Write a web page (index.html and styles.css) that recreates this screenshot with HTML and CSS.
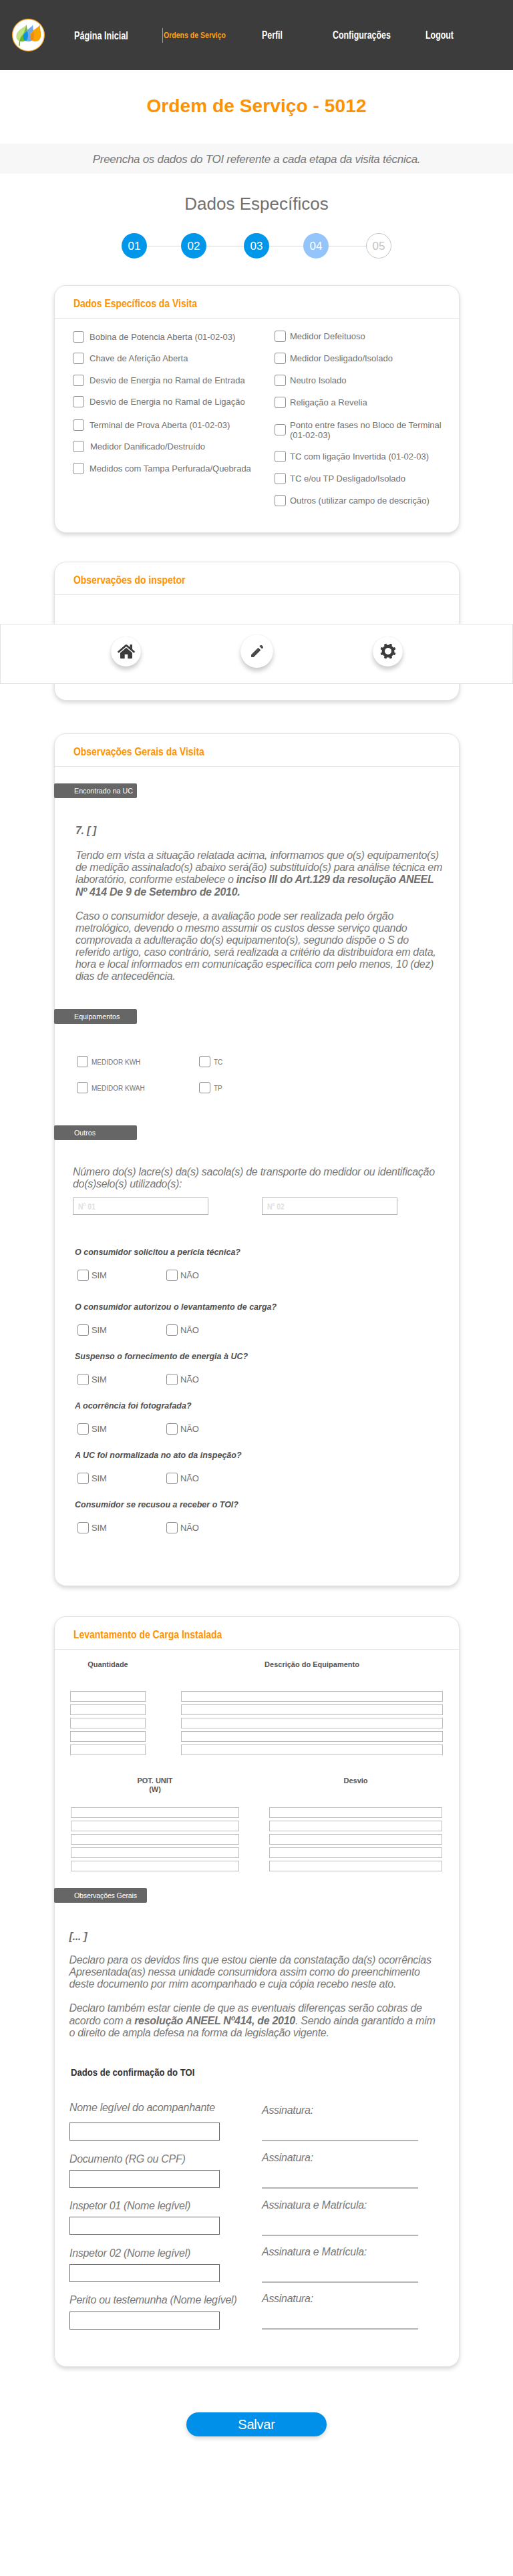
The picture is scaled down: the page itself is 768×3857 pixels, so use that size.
FILE: index.html
```html
<!DOCTYPE html>
<html lang="pt-BR">
<head>
<meta charset="utf-8">
<title>Ordem de Serviço - 5012</title>
<link rel="stylesheet" href="styles.css">
</head>
<body>
<header class="topbar">
  <a class="logo">
    <svg width="49" height="49" viewBox="0 0 49 49">
      <circle cx="24.5" cy="24.5" r="23.9" fill="#fff" stroke="#f9a51a" stroke-width="1.2"/>
      <path d="M22 8.7C17 14 6.3 17 6.3 26.5C6.3 31 9 34 15 34.2C21 34 24 30 24 25C24 19 21.500 15 22 8.700Z" fill="#bfe087"/>
      <path d="M22 8.700C21.500 15 24 19 24 25C24 30 21 34 15 34.200L12.300 34L11.700 40.700H10.200C10.400 36 11 32 13 28L18 21L20 15Z" fill="#6db824"/>
      <path d="M31.200 8.700C30 13.500 16.700 18 16.700 27C16.700 31.500 20 34.200 25 34.200C30 34.200 33.200 30.500 33.200 25C33.200 19 31 16 31.200 8.700Z" fill="#6fabea"/>
      <path d="M22.600 18.500C19 21 16.700 23.500 16.700 27C16.700 30.500 18.500 32.700 20.500 33.400C23 31.500 24 28.500 24 25C24 22 23.300 20.500 22.600 18.500Z" fill="#0b93e0"/>
      <path d="M41.700 8.700C40 14 27 17.500 27 26.500C27 31.500 30.500 34.200 35 34.200C40 34.200 43.300 30 43.300 24.500C43.300 19 41.500 15 41.700 8.700Z" fill="#fba300"/>
      <path d="M32.700 19.500C29 22 27 24 27 27C27 30 28.300 32 30 33C32.500 30.500 33.500 26 32.700 19.500Z" fill="#ee8a16"/>
    </svg>
  </a>
  <a class="nav nav-first"><span class="nav-text">Página Inicial</span></a>
  <a class="nav nav-active"><span class="nav-text">Ordens de Serviço</span></a>
  <a class="nav"><span class="nav-text">Perfil</span></a>
  <a class="nav"><span class="nav-text">Configurações</span></a>
  <a class="nav"><span class="nav-text">Logout</span></a>
</header>

<h1 class="page-title">Ordem de Serviço - 5012</h1>
<p class="hint">Preencha os dados do TOI referente a cada etapa da visita técnica.</p>
<h2 class="step-title">Dados Específicos</h2>

<div class="steps">
  <span class="step">01</span><span class="link w51"></span>
  <span class="step">02</span><span class="link w56"></span>
  <span class="step">03</span><span class="link w51"></span>
  <span class="step current">04</span><span class="link w56"></span>
  <span class="step pending">05</span>
</div>

<section class="card card-data">
  <h3 class="card-title"><span>Dados Específicos da Visita</span></h3>
  <div class="columns">
    <div class="col-left">
      <label class="check"><i class="box"></i>Bobina de Potencia Aberta (01-02-03)</label>
      <label class="check"><i class="box"></i>Chave de Aferição Aberta</label>
      <label class="check"><i class="box"></i>Desvio de Energia no Ramal de Entrada</label>
      <label class="check"><i class="box"></i>Desvio de Energia no Ramal de Ligação</label>
      <label class="check"><i class="box"></i>Terminal de Prova Aberta (01-02-03)</label>
      <label class="check nudge"><i class="box"></i>Medidor Danificado/Destruído</label>
      <label class="check"><i class="box"></i>Medidos com Tampa Perfurada/Quebrada</label>
    </div>
    <div class="col-right">
      <label class="check"><i class="box"></i>Medidor Defeituoso</label>
      <label class="check"><i class="box"></i>Medidor Desligado/Isolado</label>
      <label class="check"><i class="box"></i>Neutro Isolado</label>
      <label class="check"><i class="box"></i>Religação a Revelia</label>
      <label class="check tall"><i class="box"></i><span>Ponto entre fases no Bloco de Terminal<br>(01-02-03)</span></label>
      <label class="check"><i class="box"></i>TC com ligação Invertida (01-02-03)</label>
      <label class="check"><i class="box"></i>TC e/ou TP Desligado/Isolado</label>
      <label class="check"><i class="box"></i>Outros (utilizar campo de descrição)</label>
    </div>
  </div>
</section>

<section class="card card-notes">
  <h3 class="card-title"><span>Observações do inspetor</span></h3>
</section>

<section class="card card-general">
  <h3 class="card-title"><span>Observações Gerais da Visita</span></h3>
  <div class="tag tag-found">Encontrado na UC</div>
  <div class="prose prose-found">
    <p><b class="mark">7. [ ]</b></p>
    <p>Tendo em vista a situação relatada acima, informamos que o(s) equipamento(s)<br>de medição assinalado(s) abaixo será(ão) substituído(s) para análise técnica em</p>
    <p class="strong-lines">laboratório, conforme estabelece o <b>inciso III do Art.129 da resolução ANEEL<br>Nº 414 De 9 de Setembro de 2010.</b></p>
    <p class="gap">Caso o consumidor deseje, a avaliação pode ser realizada pelo órgão<br>metrológico, devendo o mesmo assumir os custos desse serviço quando<br>comprovada a adulteração do(s) equipamento(s), segundo dispõe o S do<br>referido artigo, caso contrário, será realizada a critério da distribuidora em data,<br>hora e local informados em comunicação específica com pelo menos, 10 (dez)<br>dias de antecedência.</p>
  </div>
  <div class="tag tag-equip">Equipamentos</div>
  <div class="equip">
    <label class="small-check"><i class="box"></i>MEDIDOR KWH</label>
    <label class="small-check"><i class="box"></i>TC</label>
    <label class="small-check"><i class="box"></i>MEDIDOR KWAH</label>
    <label class="small-check"><i class="box"></i>TP</label>
  </div>
  <div class="tag tag-others">Outros</div>
  <p class="prose prose-seals">Número do(s) lacre(s) da(s) sacola(s) de transporte do medidor ou identificação<br>do(s)selo(s) utilizado(s):</p>
  <div class="seals">
    <div class="seal"><span>Nº 01</span></div>
    <div class="seal"><span>Nº 02</span></div>
  </div>
  <div class="questions">
    <div class="question first"><p>O consumidor solicitou a perícia técnica?</p><div class="yesno"><label><i class="box"></i>SIM</label><label><i class="box"></i>NÃO</label></div></div>
    <div class="question"><p>O consumidor autorizou o levantamento de carga?</p><div class="yesno"><label><i class="box"></i>SIM</label><label><i class="box"></i>NÃO</label></div></div>
    <div class="question"><p>Suspenso o fornecimento de energia à UC?</p><div class="yesno"><label><i class="box"></i>SIM</label><label><i class="box"></i>NÃO</label></div></div>
    <div class="question"><p>A ocorrência foi fotografada?</p><div class="yesno"><label><i class="box"></i>SIM</label><label><i class="box"></i>NÃO</label></div></div>
    <div class="question"><p>A UC foi normalizada no ato da inspeção?</p><div class="yesno"><label><i class="box"></i>SIM</label><label><i class="box"></i>NÃO</label></div></div>
    <div class="question"><p>Consumidor se recusou a receber o TOI?</p><div class="yesno"><label><i class="box"></i>SIM</label><label><i class="box"></i>NÃO</label></div></div>
  </div>
</section>

<section class="card card-load">
  <h3 class="card-title"><span>Levantamento de Carga Instalada</span></h3>
  <div class="table table-top">
    <div class="tcol"><h4>Quantidade</h4><i></i><i></i><i></i><i></i><i></i></div>
    <div class="tcol"><h4>Descrição do Equipamento</h4><i></i><i></i><i></i><i></i><i></i></div>
  </div>
  <div class="table table-bottom">
    <div class="tcol"><h4>POT. UNIT<br>(W)</h4><i></i><i></i><i></i><i></i><i></i></div>
    <div class="tcol"><h4>Desvio</h4><i></i><i></i><i></i><i></i><i></i></div>
  </div>
  <div class="tag tag-general">Observações Gerais</div>
  <div class="prose prose-general">
    <p><b class="mark">[... ]</b></p>
    <p>Declaro para os devidos fins que estou ciente da constatação da(s) ocorrências<br>Apresentada(as) nessa unidade consumidora assim como do preenchimento<br>deste documento por mim acompanhado e cuja cópia recebo neste ato.</p>
    <p class="gap">Declaro também estar ciente de que as eventuais diferenças serão cobras de</p>
    <p class="after-bold">acordo com a <b>resolução ANEEL Nº414, de 2010</b>. Sendo ainda garantido a mim<br>o direito de ampla defesa na forma da legislação vigente.</p>
  </div>
  <h4 class="confirm"><span>Dados de confirmação do TOI</span></h4>
  <div class="signatures">
    <div class="names">
      <p class="name-first">Nome legível do acompanhante</p><i class="wide-gap"></i>
      <p>Documento (RG ou CPF)</p><i></i>
      <p>Inspetor 01 (Nome legível)</p><i class="wide-gap"></i>
      <p>Inspetor 02 (Nome legível)</p><i></i>
      <p class="name-last">Perito ou testemunha (Nome legível)</p><i></i>
    </div>
    <div class="signs">
      <p>Assinatura:</p>
      <p>Assinatura:</p>
      <p>Assinatura e Matrícula:</p>
      <p>Assinatura e Matrícula:</p>
      <p>Assinatura:</p>
    </div>
  </div>
</section>

<button class="save">Salvar</button>

<nav class="dock">
  <a class="dock-btn">
    <svg width="26" height="21" viewBox="0 0 26 21" fill="#3c3c3c">
      <path d="M13 0C13.500 0 14 .2 14.400 .5L18.500 4V.6Q18.500 0 19.100 0H21.400Q22 0 22 .6V7L25.700 10.200Q26.200 10.700 25.800 11.200L24.900 12.200Q24.400 12.700 23.900 12.200L13 3L2.100 12.200Q1.600 12.700 1.100 12.200L.2 11.200Q-.2 10.700 .3 10.200L11.600 .5C12 .2 12.500 0 13 0Z"/>
      <path d="M13 4.800L22 12.400V20Q22 21 21 21H15.300V14.700H10.700V21H5Q4 21 4 20V12.400Z"/>
    </svg>
  </a>
  <a class="dock-btn big">
    <svg width="18" height="18" viewBox="3 3 18 18" fill="#4b4b4b">
      <path d="M3 17.250V20.200Q3 21 3.800 21H6.750L17.300 10.440L13.560 6.690Z"/>
      <path d="M20.710 7.040a1.500 1.500 0 0 0 0-1.910l-1.840-1.840a1.500 1.500 0 0 0-1.910 0l-1.500 1.500 3.750 3.750Z"/>
    </svg>
  </a>
  <a class="dock-btn">
    <svg width="24" height="24" viewBox="-12 -12 24 24" fill="#3c3c3c">
      <circle r="7.200" fill="none" stroke="#3c3c3c" stroke-width="4.400"/>
      <rect x="-2" y="-11.700" width="4" height="5" rx="1.200" transform="rotate(22.500)"/>
      <rect x="-2" y="-11.700" width="4" height="5" rx="1.200" transform="rotate(67.500)"/>
      <rect x="-2" y="-11.700" width="4" height="5" rx="1.200" transform="rotate(112.500)"/>
      <rect x="-2" y="-11.700" width="4" height="5" rx="1.200" transform="rotate(157.500)"/>
      <rect x="-2" y="-11.700" width="4" height="5" rx="1.200" transform="rotate(202.500)"/>
      <rect x="-2" y="-11.700" width="4" height="5" rx="1.200" transform="rotate(247.500)"/>
      <rect x="-2" y="-11.700" width="4" height="5" rx="1.200" transform="rotate(292.500)"/>
      <rect x="-2" y="-11.700" width="4" height="5" rx="1.200" transform="rotate(337.500)"/>
    </svg>
  </a>
</nav>
</body>
</html>
```
FILE: styles.css
```css
* { box-sizing: border-box; }
body {
  margin: 0;
  position: relative;
  width: 768px;
  height: 3857px;
  background: #fff;
  color: #707070;
  font-family: "Liberation Sans", Arial, sans-serif;
  overflow-x: hidden;
}
h1, h2, h3, h4, p { margin: 0; }
i { display: block; }

/* Header */
.topbar {
  display: grid;
  grid-template-columns: 111px 132px 149px 106px 139px 1fr;
  height: 105px;
  background: #3c3c3c;
}
.logo { padding: 28px 0 0 18px; }
.logo svg { display: block; }
.nav {
  padding-top: 44px;
  font-size: 16px;
  line-height: 18px;
  font-weight: bold;
  color: #fff;
  white-space: nowrap;
}
.nav-text { display: inline-block; transform: scaleX(.775); transform-origin: left; }
.nav-first { padding-top: 45px; }
.nav-first .nav-text { transform: scaleX(.79); }
.nav-active {
  height: 22px;
  margin-top: 42px;
  padding: 2px 0 0 1px;
  border-left: 1px solid #ff9200;
  font-size: 13px;
  line-height: 17px;
  color: #ffa01c;
}
.nav-active .nav-text { transform: scaleX(.81); }

/* Intro */
.page-title {
  margin-top: 38px;
  height: 72px;
  font-size: 28px;
  line-height: 32px;
  letter-spacing: .1px;
  text-align: center;
  color: #ff9200;
}
.hint {
  height: 45px;
  padding-top: 14px;
  background: #f7f7f7;
  color: #787878;
  font-size: 17px;
  line-height: 19px;
  font-style: italic;
  letter-spacing: -.28px;
  text-align: center;
}
.step-title {
  margin-top: 30px;
  height: 59px;
  font-size: 26px;
  line-height: 30px;
  font-weight: normal;
  text-align: center;
}
.steps { display: flex; align-items: center; margin-left: 182px; height: 38px; }
.step {
  width: 38px;
  height: 38px;
  border-radius: 50%;
  background: #0097ea;
  color: #fff;
  font-size: 17px;
  line-height: 40px;
  text-align: center;
}
.step.current { background: #93c5fb; }
.step.pending { background: #fff; border: 1px solid #c4c4c4; color: #c4c4c4; line-height: 38px; }
.link { height: 1px; background: #d8d8d8; }
.w51 { width: 51px; }
.w56 { width: 56px; }

/* Cards */
.card {
  display: flow-root;
  width: 607px;
  margin-left: 81px;
  border: 1px solid #e3e3e3;
  border-radius: 18px;
  background: #fff;
  box-shadow: 0 3px 6px rgba(0, 0, 0, .16);
}
.card-data { height: 371px; margin-top: 40px; }
.card-notes { height: 208px; margin-top: 43px; }
.card-general { height: 1277px; margin-top: 49px; }
.card-load { height: 1124px; margin-top: 45px; }
.card-title {
  height: 49px;
  padding: 17px 0 0 28px;
  border-bottom: 1px solid #e3e3e3;
  font-size: 17px;
  line-height: 19px;
  color: #ff9200;
}
.card-title span { display: inline-block; transform: scaleX(.82); transform-origin: left; }

/* Checkboxes */
.box {
  flex: none;
  width: 17px;
  height: 17px;
  border: 1px solid #8f8f8f;
  border-radius: 3px;
  background: #fff;
}
.columns { display: flex; }
.col-left { width: 302px; padding: 19px 0 0 27px; }
.col-right { padding: 18px 0 0 27px; }
.check { display: flex; align-items: center; height: 17px; margin-bottom: 16px; font-size: 13px; line-height: 15px; white-space: nowrap; }
.col-left .check { gap: 8px; }
.col-left .check.nudge { gap: 9px; }
.col-right .check { gap: 6px; }
.col-left .check:nth-child(1), .col-left .check:nth-child(3), .col-left .check:nth-child(5) { margin-bottom: 15px; }
.col-left .check:nth-child(4) { margin-bottom: 18px; }
.col-right .check:nth-child(4) { margin-bottom: 17px; }
.col-right .check.tall { height: 31px; }

/* Section tags */
.tag {
  width: 124px;
  height: 22px;
  margin-left: -1px;
  padding-left: 30px;
  border-radius: 2px;
  background: #666;
  color: #fff;
  font-size: 10.700px;
  line-height: 22px;
  white-space: nowrap;
}
.tag-found { margin-top: 25px; }
.tag-equip { margin-top: 40px; }
.tag-others { margin-top: 48px; }
.tag-general { width: 139px; margin-top: 25px; letter-spacing: -.2px; }

/* Running text */
.prose { color: #787878; font-size: 16px; line-height: 18px; font-style: italic; letter-spacing: -.29px; white-space: nowrap; }
.prose b { color: #707070; }
.mark { display: block; height: 37px; }
.prose-found { margin: 40px 0 0 31px; }
.strong-lines { line-height: 18.500px; }
.prose .gap { margin-top: 18px; }
.prose-seals { margin: 39px 0 0 27px; }
.prose-general { margin: 42px 0 0 21.500px; }
.prose-general .mark { height: 35px; }
.after-bold { margin-top: 1px; }

.equip { display: grid; grid-template-columns: 183px 120px; row-gap: 22px; margin: 48px 0 0 33px; }
.small-check { display: flex; align-items: flex-start; gap: 5px; height: 17px; font-size: 10px; line-height: 19px; }

.seals { display: flex; gap: 80px; margin: 11px 0 0 27px; }
.seal { width: 203px; height: 26px; padding: 6px 0 0 7px; border: 1px solid #b4b4b4; font-size: 12px; line-height: 14px; font-weight: bold; color: #e2e2e2; }
.seal span { display: inline-block; transform: scaleX(.87); transform-origin: left; }

.questions { margin: 49px 0 0 30px; }
.question { height: 74px; }
.question.first { height: 82px; }
.question p { height: 33px; font-size: 12.500px; line-height: 15px; font-style: italic; font-weight: bold; color: #4f4f4f; }
.yesno { display: flex; padding-left: 4px; }
.yesno label { display: flex; align-items: center; gap: 4px; width: 133px; height: 17px; font-size: 13px; line-height: 15px; letter-spacing: -.1px; }

/* Load table */
.table { display: flex; }
.tcol { display: grid; align-content: start; row-gap: 4px; }
.tcol h4 { height: 42px; font-size: 11px; line-height: 13px; text-align: center; color: #555; }
.tcol i { height: 16px; border: 1px solid #bdbdbd; }
.table-top { margin: 16px 0 0 23px; gap: 53px; }
.table-top .tcol { grid-template-columns: 113px; }
.table-top .tcol + .tcol { grid-template-columns: 392px; }
.table-bottom { margin: 32px 0 0 24px; gap: 45px; }
.table-bottom .tcol { grid-template-columns: 252px; }
.table-bottom .tcol + .tcol { grid-template-columns: 259px; }

/* Confirmation */
.confirm { margin: 41px 0 0 24px; height: 53px; font-size: 15.500px; line-height: 18px; color: #333; }
.confirm span { display: inline-block; transform: scaleX(.845); transform-origin: left; }
.signatures { display: flex; color: #787878; font-size: 16px; line-height: 18px; font-style: italic; letter-spacing: -.29px; white-space: nowrap; }
.names { width: 288px; padding-left: 22px; }
.names p { height: 25px; }
.names .name-first { height: 31px; }
.names .name-last { height: 26px; }
.names i { width: 225px; height: 27px; margin-bottom: 18px; border: 1px solid #666; }
.names .wide-gap { margin-bottom: 19px; }
.signs { padding: 4px 0 0 22px; }
.signs p { width: 234px; height: 55px; margin-bottom: 16px; border-bottom: 2px solid #b4b4b4; }
.signs p:nth-child(n+3) { margin-bottom: 15px; }

/* Save */
.save {
  display: block;
  width: 210px;
  height: 36px;
  margin: 68px 0 0 279px;
  padding: 0;
  border: 0;
  border-radius: 18px;
  background: #0090ea;
  box-shadow: 0 3px 6px rgba(0, 0, 0, .16);
  color: #fff;
  font: 20px/36px "Liberation Sans", Arial, sans-serif;
  letter-spacing: -.2px;
}

/* Floating dock laid over the page */
.dock {
  position: absolute;
  left: 0;
  top: 934px;
  display: flex;
  align-items: center;
  justify-content: space-between;
  width: 768px;
  height: 90px;
  padding: 0 164px 8px 165px;
  border: 1px solid #e3e3e3;
  background: #fff;
}
.dock-btn {
  display: flex;
  align-items: center;
  justify-content: center;
  width: 45px;
  height: 45px;
  border-radius: 50%;
  background: #fff;
  box-shadow: 0 5px 6px rgba(0, 0, 0, .2), 0 0 1px rgba(0, 0, 0, .15);
}
.dock-btn.big { width: 49px; height: 50px; }
```
